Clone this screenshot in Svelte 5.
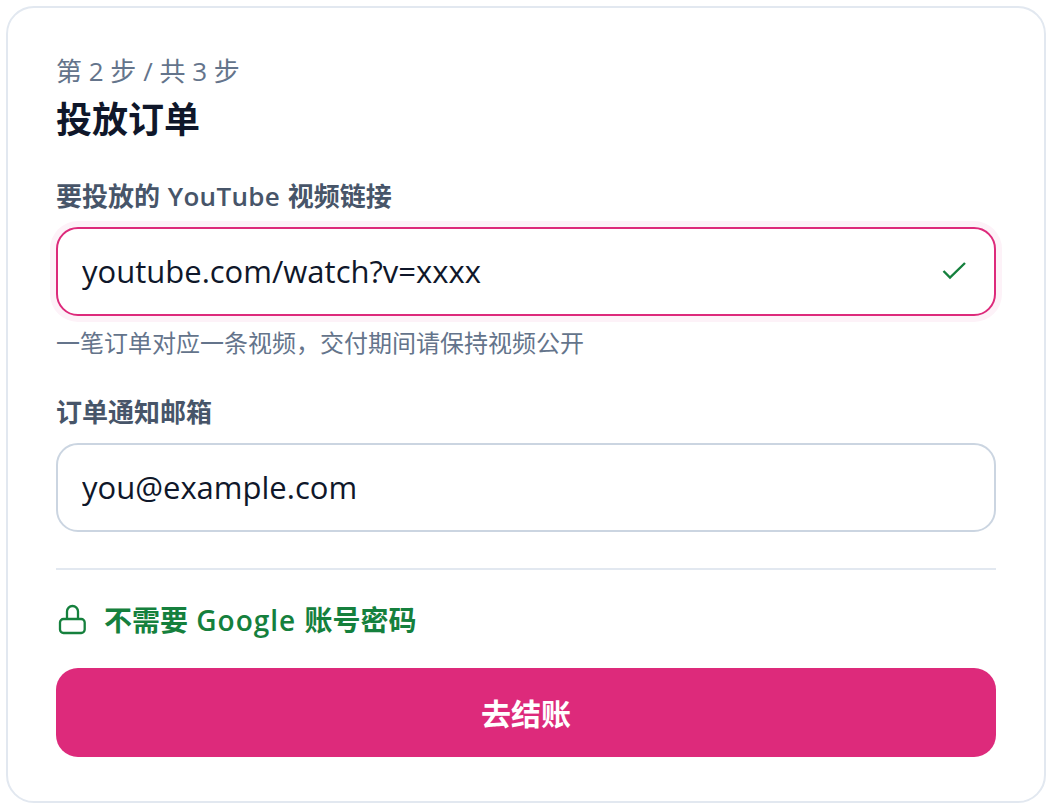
<script>
  let videoUrl = 'youtube.com/watch?v=xxxx';
  let email = 'you@example.com';
</script>

<main class="page">
  <section class="card">
    <p class="step">第 2 步 / 共 3 步</p>
    <h1>投放订单</h1>

    <label class="label" for="video">要投放的 <span class="yt">YouTube</span> 视频链接</label>
    <div class="field focused">
      <input id="video" bind:value={videoUrl} />
      <svg class="check" viewBox="0 0 28 28" width="28" height="28" fill="none" stroke="#15803d" stroke-width="2.4">
        <path d="M3.500 13l6.500 6.500L25 5" />
      </svg>
    </div>
    <p class="hint">一笔订单对应一条视频，交付期间请保持视频公开</p>

    <label class="label second" for="email">订单通知邮箱</label>
    <div class="field">
      <input id="email" bind:value={email} />
    </div>

    <hr />

    <div class="secure">
      <svg viewBox="0 0 30 32" width="30" height="32" fill="none" stroke="#15803d" stroke-width="2.300">
        <rect x="4" y="15" width="24.700" height="14" rx="3.500" />
        <path d="M11 15V7.500a5.500 5.500 0 0 1 11 0V15" />
      </svg>
      <span>不需要 <span class="brand">Google</span> 账号密码</span>
    </div>

    <button type="button" class="submit">去结账</button>
  </section>
</main>

<style>
  :global(body) {
    background: #fff;
  }
  .page {
    padding: 6px;
    font-family: "Open Sans", "Noto Sans CJK SC", sans-serif;
  }
  .card {
    box-sizing: border-box;
    height: 797px;
    border: 2px solid #e2e8f0;
    border-radius: 28px;
    padding: 48px 48px 44px;
    display: flex;
    flex-direction: column;
    background: #fff;
  }
  .step {
    margin: 0;
    font-size: 26px;
    line-height: 30px;
    color: #64748b;
  }
  h1 {
    margin: 0;
    padding-top: 12px;
    font-size: 36px;
    line-height: 44px;
    font-weight: 700;
    color: #0f172a;
  }
  .label {
    margin-top: 36px;
    margin-bottom: 13px;
    font-size: 26px;
    line-height: 36px;
    font-weight: 600;
    word-spacing: 1px;
    color: #475569;
  }
  .yt {
    letter-spacing: 0.3px;
  }
  .label.second {
    margin-top: 34px;
  }
  .field {
    box-sizing: border-box;
    flex: none;
    height: 89px;
    border: 2px solid #cbd5e1;
    border-radius: 22px;
    padding: 0 26px 0 24px;
    display: flex;
    align-items: center;
    background: #fff;
  }
  .field.focused {
    border-color: #dd2a7b;
    box-shadow: 0 0 0 6px #fdf2f8;
  }
  input {
    flex: 1;
    min-width: 0;
    border: 0;
    outline: 0;
    padding: 0 0 2px;
    background: transparent;
    font: inherit;
    font-size: 31px;
    color: #0f172a;
  }
  .check {
    flex: none;
  }
  .hint {
    margin: 10px 0 0;
    font-size: 24px;
    line-height: 34px;
    color: #64748b;
  }
  hr {
    width: 100%;
    margin: 36px 0 0;
    border: 0;
    border-top: 2px solid #e2e8f0;
  }
  .secure {
    margin-top: 32px;
    display: flex;
    align-items: center;
    gap: 18px;
    font-size: 28px;
    line-height: 36px;
    font-weight: 600;
    word-spacing: 1px;
    color: #15803d;
  }
  .secure svg {
    margin-bottom: 1px;
  }
  .brand {
    letter-spacing: 1px;
  }
  .submit {
    flex: none;
    margin-top: 30px;
    height: 89px;
    border: 0;
    border-radius: 22px;
    padding: 0 0 2px;
    background: #dd2a7b;
    color: #fff;
    font: inherit;
    font-size: 30px;
    font-weight: 700;
  }
</style>
